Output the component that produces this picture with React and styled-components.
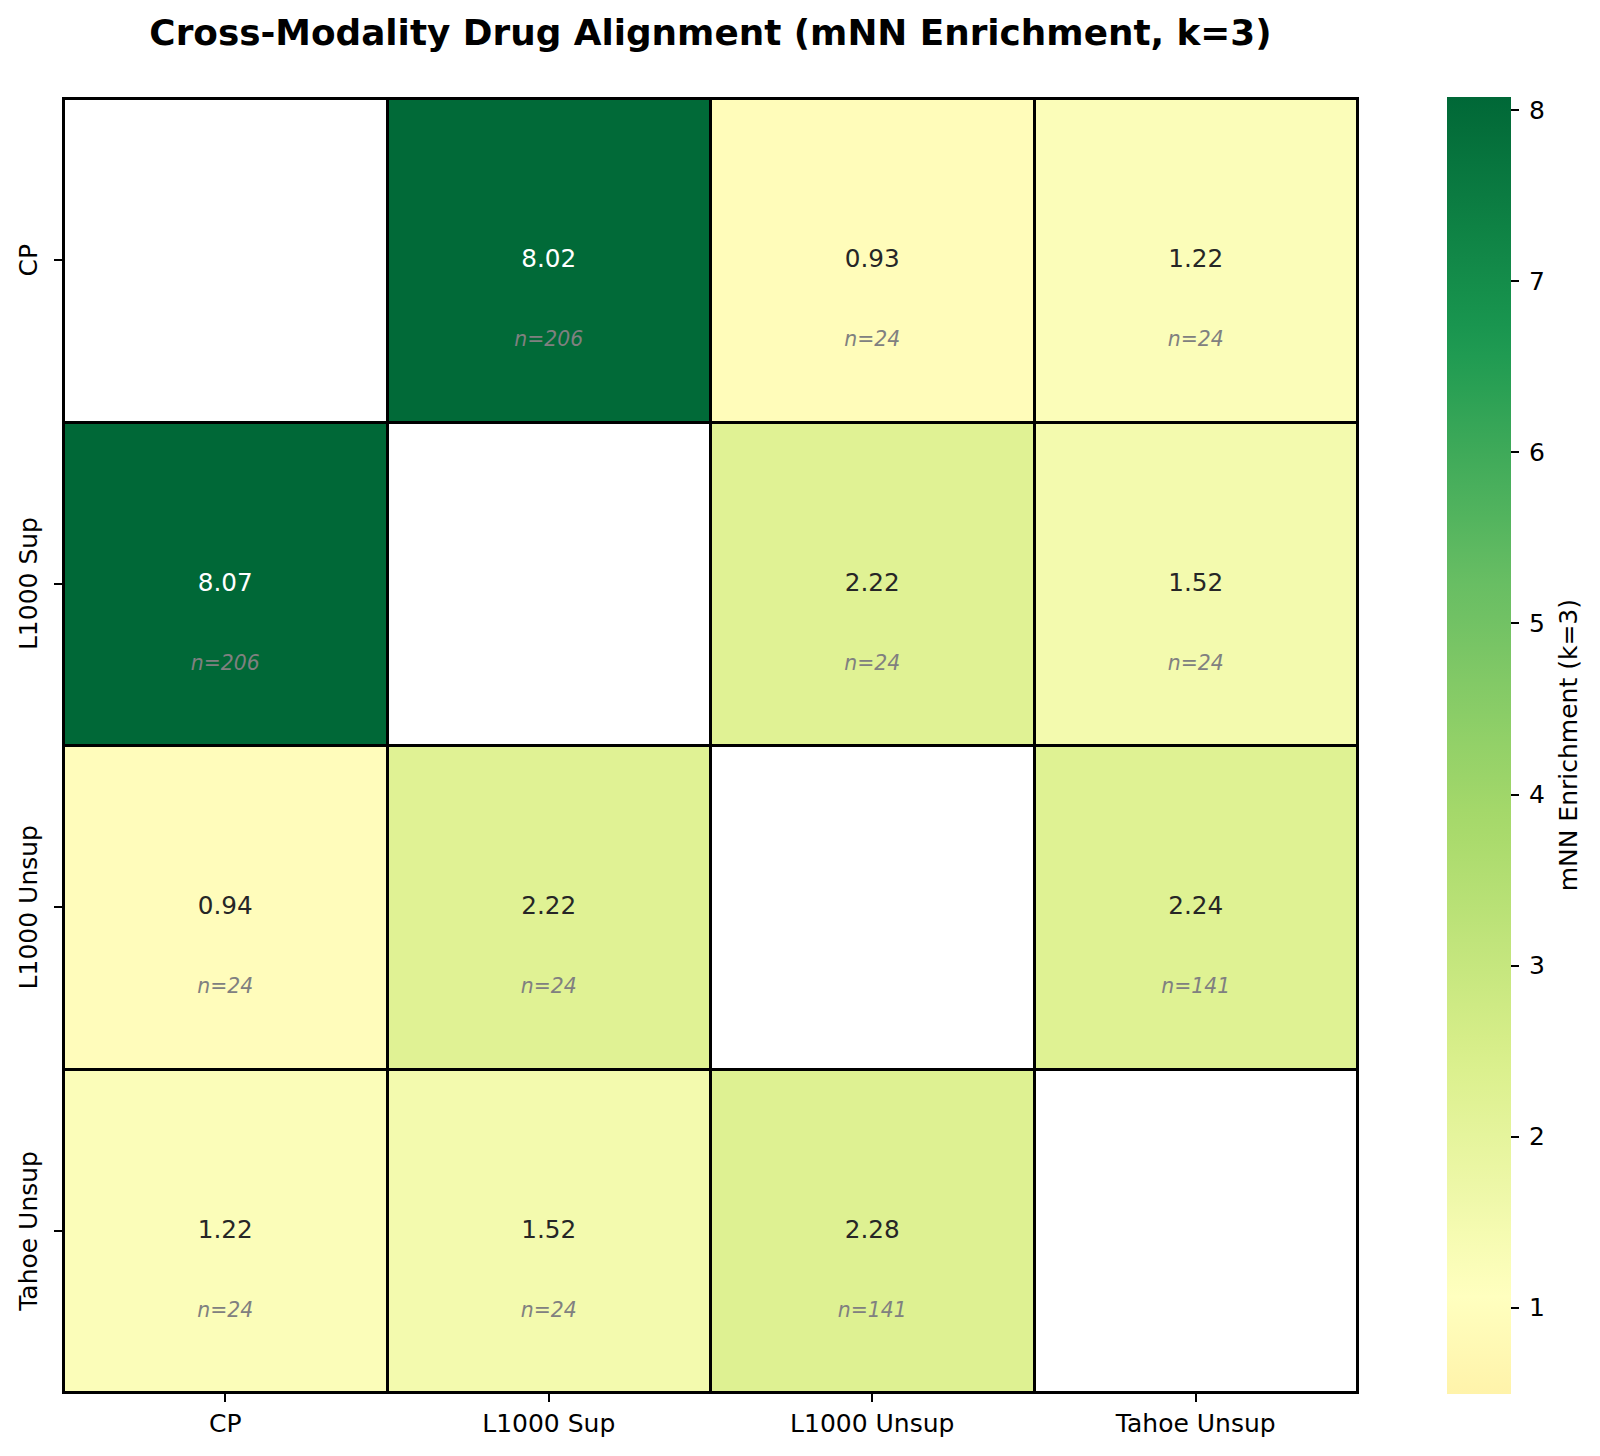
import React from "react";
import styled, { createGlobalStyle } from "styled-components";

const LABELS = ["CP", "L1000 Sup", "L1000 Unsup", "Tahoe Unsup"];

// [enrichment, n] per pair, null on the diagonal
const DATA = [
  [null, [8.02, 206], [0.93, 24], [1.22, 24]],
  [[8.07, 206], null, [2.22, 24], [1.52, 24]],
  [[0.94, 24], [2.22, 24], null, [2.24, 141]],
  [[1.22, 24], [1.52, 24], [2.28, 141], null],
];

const VMIN = 0.5;
const VMAX = 8.07;
const CMAP_START = 0.46;

const RDYLGN = [
  "#a50026", "#d73027", "#f46d43", "#fdae61", "#fee08b", "#ffffbf",
  "#d9ef8b", "#a6d96a", "#66bd63", "#1a9850", "#006837",
];

const hexToRgb = (h) => [1, 3, 5].map((i) => parseInt(h.slice(i, i + 2), 16));

const cmap = (f) => {
  const x = Math.min(Math.max(f, 0), 1) * 10;
  const i = Math.min(Math.floor(x), 9);
  const t = x - i;
  const a = hexToRgb(RDYLGN[i]);
  const b = hexToRgb(RDYLGN[i + 1]);
  const c = a.map((v, k) => Math.round(v + (b[k] - v) * t));
  return `rgb(${c[0]}, ${c[1]}, ${c[2]})`;
};

const colorFor = (v) =>
  cmap(CMAP_START + (1 - CMAP_START) * ((v - VMIN) / (VMAX - VMIN)));

const GRADIENT = `linear-gradient(to top, ${Array.from({ length: 41 }, (_, i) => {
  const p = i / 40;
  return `${colorFor(VMIN + p * (VMAX - VMIN))} ${(p * 100).toFixed(2)}%`;
}).join(", ")})`;

const CB_TICKS = [8, 7, 6, 5, 4, 3, 2, 1];

const GlobalStyle = createGlobalStyle`
  html, body {
    margin: 0;
    padding: 0;
    background: #ffffff;
  }
`;

const Figure = styled.div`
  width: 1600px;
  height: 1456px;
  display: flex;
  flex-direction: column;
  font-family: "DejaVu Sans", "Liberation Sans", sans-serif;
  color: #000;
  overflow: hidden;
`;

const TitleRow = styled.div`
  height: 97px;
  padding-left: 62px;
  box-sizing: border-box;
`;

const Title = styled.h1`
  width: 1297px;
  margin: 0;
  padding-top: 12px;
  text-align: center;
  font-size: 35.8px;
  line-height: 42px;
  font-weight: bold;
  white-space: nowrap;
`;

const Body = styled.div`
  display: flex;
  height: 1297px;
`;

const YAxis = styled.div`
  width: 62px;
  display: grid;
  grid-template-rows: repeat(4, 1fr);
  row-gap: 3px;
  padding: 3px 0;
  box-sizing: border-box;
`;

const YTickRow = styled.div`
  display: flex;
  align-items: center;
  justify-content: flex-end;
  min-height: 0;
`;

const YLabel = styled.span`
  writing-mode: vertical-rl;
  transform: rotate(180deg);
  font-size: 25px;
  line-height: 29px;
  white-space: nowrap;
  margin-right: 11px;
`;

const YTick = styled.span`
  width: 8px;
  height: 2px;
  background: #000;
`;

const Heatmap = styled.div`
  width: 1297px;
  height: 1297px;
  box-sizing: border-box;
  padding: 3px;
  gap: 3px;
  background: #000;
  display: grid;
  grid-template-columns: repeat(4, 1fr);
  grid-template-rows: repeat(4, 1fr);
`;

const Cell = styled.div`
  background: ${(p) => p.$bg};
  display: grid;
  grid-template-rows: 1fr auto 1fr;
  justify-items: center;
  padding-bottom: 3px;
  min-width: 0;
  min-height: 0;
`;

const Value = styled.span`
  grid-row: 2;
  font-size: 24.7px;
  line-height: 29px;
  color: ${(p) => (p.$light ? "#ffffff" : "#262626")};
`;

const Count = styled.span`
  grid-row: 3;
  align-self: start;
  margin-top: 54px;
  font-size: 20.4px;
  line-height: 24px;
  font-style: italic;
  color: #808080;
`;

const CbGap = styled.div`
  width: 88px;
`;

const ColorBar = styled.div`
  width: 64px;
  background: ${GRADIENT};
`;

const CbTicks = styled.div`
  display: flex;
  flex-direction: column;
  justify-content: space-between;
  padding: 13px 0 86px;
  box-sizing: border-box;
  width: 34px;
`;

const CbTick = styled.div`
  height: 0;
  display: flex;
  align-items: center;
`;

const CbTickMark = styled.span`
  width: 8px;
  height: 2px;
  background: #000;
  margin-right: 10px;
  flex: none;
`;

const CbTickLabel = styled.span`
  font-size: 25px;
  line-height: 29px;
`;

const CbLabel = styled.span`
  align-self: center;
  margin-left: 9px;
  writing-mode: vertical-rl;
  transform: rotate(180deg);
  font-size: 25px;
  line-height: 29px;
  white-space: nowrap;
`;

const XAxisRow = styled.div`
  padding-left: 62px;
`;

const XAxis = styled.div`
  width: 1297px;
  display: grid;
  grid-template-columns: repeat(4, 1fr);
  column-gap: 3px;
  padding: 0 3px;
  box-sizing: border-box;
`;

const XTickCol = styled.div`
  display: flex;
  flex-direction: column;
  align-items: center;
`;

const XTick = styled.span`
  width: 2px;
  height: 8px;
  background: #000;
`;

const XLabel = styled.span`
  margin-top: 7px;
  font-size: 25px;
  line-height: 29px;
  white-space: nowrap;
`;

export default function App() {
  return (
    <>
      <GlobalStyle />
      <Figure>
        <TitleRow>
          <Title>Cross-Modality Drug Alignment (mNN Enrichment, k=3)</Title>
        </TitleRow>
        <Body>
          <YAxis>
            {LABELS.map((l) => (
              <YTickRow key={l}>
                <YLabel>{l}</YLabel>
                <YTick />
              </YTickRow>
            ))}
          </YAxis>
          <Heatmap>
            {DATA.map((row, r) =>
              row.map((cell, c) =>
                cell ? (
                  <Cell key={`${r}-${c}`} $bg={colorFor(cell[0])}>
                    <Value $light={cell[0] > 6}>{cell[0].toFixed(2)}</Value>
                    <Count>n={cell[1]}</Count>
                  </Cell>
                ) : (
                  <Cell key={`${r}-${c}`} $bg="#ffffff" />
                )
              )
            )}
          </Heatmap>
          <CbGap />
          <ColorBar />
          <CbTicks>
            {CB_TICKS.map((t) => (
              <CbTick key={t}>
                <CbTickMark />
                <CbTickLabel>{t}</CbTickLabel>
              </CbTick>
            ))}
          </CbTicks>
          <CbLabel>mNN Enrichment (k=3)</CbLabel>
        </Body>
        <XAxisRow>
          <XAxis>
            {LABELS.map((l) => (
              <XTickCol key={l}>
                <XTick />
                <XLabel>{l}</XLabel>
              </XTickCol>
            ))}
          </XAxis>
        </XAxisRow>
      </Figure>
    </>
  );
}
